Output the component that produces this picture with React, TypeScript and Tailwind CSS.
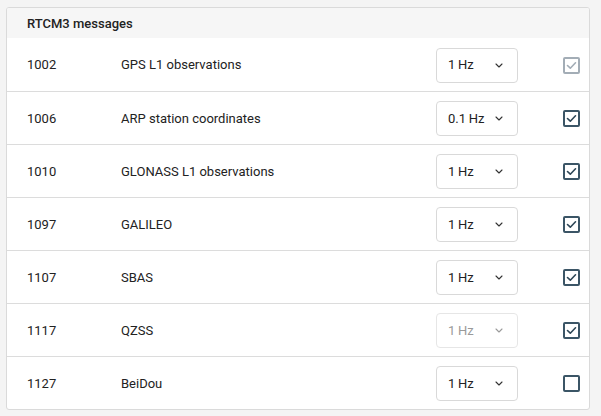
import { useState } from "react";

type Msg = {
  code: string;
  name: string;
  rate: string;
  checked: boolean;
  rateDisabled?: boolean;
  checkDisabled?: boolean;
};

const MESSAGES: Msg[] = [
  { code: "1002", name: "GPS L1 observations", rate: "1\u2009Hz", checked: true, checkDisabled: true },
  { code: "1006", name: "ARP station coordinates", rate: "0.1\u2009Hz", checked: true },
  { code: "1010", name: "GLONASS L1 observations", rate: "1\u2009Hz", checked: true },
  { code: "1097", name: "GALILEO", rate: "1\u2009Hz", checked: true },
  { code: "1107", name: "SBAS", rate: "1\u2009Hz", checked: true },
  { code: "1117", name: "QZSS", rate: "1\u2009Hz", checked: true, rateDisabled: true },
  { code: "1127", name: "BeiDou", rate: "1\u2009Hz", checked: false },
];

const Chevron = ({ muted }: { muted?: boolean }) => (
  <svg width="8" height="5" viewBox="0 0 8 5" fill="none">
    <path
      d="M1 1l3 3 3-3"
      stroke={muted ? "#9a9a9a" : "#333"}
      strokeWidth="1.1"
      strokeLinecap="round"
      strokeLinejoin="round"
    />
  </svg>
);

const RateSelect = ({ value, disabled }: { value: string; disabled?: boolean }) => (
  <div
    className={`flex h-[35px] w-[82px] items-center justify-between rounded-[4px] border pl-[11px] pr-[14px] ${
      disabled ? "border-[#e6e6e6] text-[#9a9a9a]" : "border-[#d9d9d9] text-[#222]"
    }`}
  >
    <span className="text-[13px]">{value}</span>
    <Chevron muted={disabled} />
  </div>
);

const Check = ({ checked, disabled, onClick }: { checked: boolean; disabled?: boolean; onClick: () => void }) => (
  <button
    onClick={onClick}
    className={`flex h-[17px] w-[17px] items-center justify-center rounded-[2px] border-2 bg-white ${
      disabled ? "border-[#a3adb6]" : "border-[#3b5566]"
    }`}
  >
    {checked && (
      <svg width="11" height="9" viewBox="0 0 11 9" fill="none">
        <path
          d="M1.5 4.5l2.8 2.7L9.5 1.8"
          stroke={disabled ? "#a3adb6" : "#2e4757"}
          strokeWidth="1.6"
          strokeLinecap="round"
          strokeLinejoin="round"
        />
      </svg>
    )}
  </button>
);

export default function App() {
  const [rows, setRows] = useState(MESSAGES);

  const toggle = (i: number) =>
    setRows((r) => r.map((m, j) => (j === i && !m.checkDisabled ? { ...m, checked: !m.checked } : m)));

  return (
    <div className="min-h-[416px] w-[601px] bg-[#f4f4f4] pt-[7px] pl-[6px] font-['Roboto','Liberation_Sans',sans-serif]">
      <div className="w-[584px] overflow-hidden rounded-[3px] border border-[#dadada] bg-white">
        {/* header */}
        <div className="flex h-[30px] items-center bg-[#f6f6f6] pl-[20px] pt-[1px] text-[13px] font-medium text-[#222]">
          RTCM3 messages
        </div>

        {rows.map((m, i) => (
          <div
            key={m.code}
            className={`flex h-[53px] items-center pl-[20px] pt-[1px] text-[13px] text-[#222] ${i > 0 ? "border-t border-[#dcdcdc]" : ""}`}
          >
            <div className="w-[94px]">{m.code}</div>
            <div className="flex-1">{m.name}</div>
            <RateSelect value={m.rate} disabled={m.rateDisabled} />
            <div className="ml-[45px] mr-[9px] flex w-[17px] justify-center">
              <Check checked={m.checked} disabled={m.checkDisabled} onClick={() => toggle(i)} />
            </div>
          </div>
        ))}
      </div>
    </div>
  );
}
